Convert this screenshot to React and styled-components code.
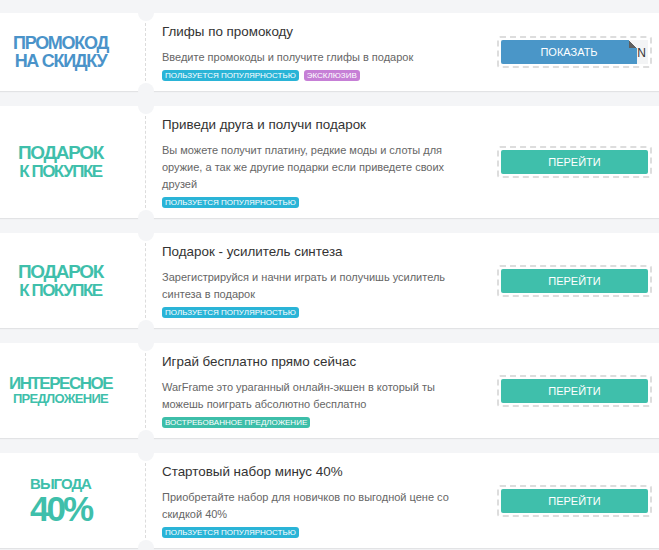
import React from 'react'
import styled, { createGlobalStyle } from 'styled-components'

const GlobalStyle = createGlobalStyle`
  html, body {
    margin: 0;
    padding: 0;
    background: #f4f5f7;
    font-family: 'Liberation Sans', Arial, sans-serif;
    overflow: hidden;
  }
`

const BLUE = '#4a93c9'
const TEAL = '#3fbfab'

const offers = [
  {
    color: BLUE,
    lines: [
      { text: 'ПРОМОКОД', size: 18, ls: -1.3, lh: 18 },
      { text: 'НА СКИДКУ', size: 18, ls: -1.3, lh: 18 },
    ],
    title: 'Глифы по промокоду',
    desc: 'Введите промокоды и получите глифы в подарок',
    tags: [
      { text: 'Пользуется популярностью', bg: '#2ab4d7' },
      { text: 'Эксклюзив', bg: '#c67fd6' },
    ],
    promo: 'N',
    button: 'Показать',
  },
  {
    color: TEAL,
    lines: [
      { text: 'ПОДАРОК', size: 19, ls: -1.3, lh: 20 },
      { text: 'К ПОКУПКЕ', size: 17, ls: -1.5, lh: 18 },
    ],
    title: 'Приведи друга и получи подарок',
    desc: 'Вы можете получит платину, редкие моды и слоты для оружие, а так же другие подарки если приведете своих друзей',
    tags: [{ text: 'Пользуется популярностью', bg: '#2ab4d7' }],
    button: 'Перейти',
  },
  {
    color: TEAL,
    lines: [
      { text: 'ПОДАРОК', size: 19, ls: -1.3, lh: 20 },
      { text: 'К ПОКУПКЕ', size: 17, ls: -1.5, lh: 18 },
    ],
    title: 'Подарок - усилитель синтеза',
    desc: 'Зарегистрируйся и начни играть и получишь усилитель синтеза в подарок',
    tags: [{ text: 'Пользуется популярностью', bg: '#2ab4d7' }],
    button: 'Перейти',
  },
  {
    color: TEAL,
    lines: [
      { text: 'ИНТЕРЕСНОЕ', size: 17, ls: -1.5, lh: 17 },
      { text: 'ПРЕДЛОЖЕНИЕ', size: 13, ls: -0.7, lh: 14 },
    ],
    title: 'Играй бесплатно прямо сейчас',
    desc: 'WarFrame это ураганный онлайн-экшен в который ты можешь поиграть абсолютно бесплатно',
    tags: [{ text: 'Востребованное предложение', bg: '#3dbea9' }],
    button: 'Перейти',
  },
  {
    color: TEAL,
    lines: [
      { text: 'ВЫГОДА', size: 15, ls: -1, lh: 15 },
      { text: '40%', size: 35, ls: -3, lh: 35 },
    ],
    title: 'Стартовый набор минус 40%',
    desc: 'Приобретайте набор для новичков по выгодной цене со скидкой 40%',
    tags: [{ text: 'Пользуется популярностью', bg: '#2ab4d7' }],
    button: 'Перейти',
  },
]

function App() {
  return (
    <Page>
      <GlobalStyle />
      {offers.map((o, i) => (
        <Card key={i}>
          <Label color={o.color}>
            {o.lines.map((l) => (
              <LabelLine key={l.text} size={l.size} ls={l.ls} lh={l.lh}>{l.text}</LabelLine>
            ))}
          </Label>
          <Body>
            <Title>{o.title}</Title>
            <Desc>{o.desc}</Desc>
            <Tags>
              {o.tags.map((t) => (
                <Tag key={t.text} bg={t.bg}>{t.text}</Tag>
              ))}
            </Tags>
          </Body>
          <Action>
            <Dashed>
              {o.promo ? (
                <PromoField>
                  <Code>{o.promo}</Code>
                  <PromoButton>{o.button}</PromoButton>
                </PromoField>
              ) : (
                <Button>{o.button}</Button>
              )}
            </Dashed>
          </Action>
        </Card>
      ))}
    </Page>
  )
}

const Page = styled.div`
  padding-top: 13px;
  width: 659px;
`

const Card = styled.div`
  position: relative;
  display: grid;
  grid-template-columns: 146px 1fr 162px;
  background: #fff;
  margin-bottom: 15px;
  box-shadow: 0 1px 1px rgba(0, 0, 0, 0.07);

  &::before,
  &::after {
    content: '';
    position: absolute;
    left: 138px;
    width: 16px;
    height: 16px;
    border-radius: 50%;
    background: #f4f5f7;
  }
  &::before {
    top: -8px;
  }
  &::after {
    bottom: -8px;
  }
`

const Label = styled.div`
  display: flex;
  flex-direction: column;
  align-items: center;
  justify-content: center;
  margin: 10px 0;
  padding-right: 24px;
  border-right: 1px dashed #dcdcdc;
  color: ${(p) => p.color};
  font-weight: bold;
  text-align: center;
`

const LabelLine = styled.div`
  font-size: ${(p) => p.size}px;
  letter-spacing: ${(p) => p.ls}px;
  line-height: ${(p) => p.lh}px;
  white-space: nowrap;
`

const Body = styled.div`
  padding: 10px 35px 10px 16px;
`

const Title = styled.div`
  font-size: 13.4px;
  line-height: 18px;
  color: #333;
  margin-bottom: 8px;
`

const Desc = styled.div`
  font-size: 11px;
  line-height: 17px;
  color: #666;
`

const Tags = styled.div`
  display: flex;
  gap: 5px;
  margin-top: 4px;
`

const Tag = styled.span`
  display: inline-block;
  height: 11px;
  line-height: 11px;
  padding: 0 3px;
  border-radius: 3px;
  background: ${(p) => p.bg};
  color: #fff;
  font-size: 8px;
  text-transform: uppercase;
  white-space: nowrap;
`

const Action = styled.div`
  display: flex;
  align-items: center;
  padding-right: 7px;
`

const Dashed = styled.div`
  width: 155px;
  box-sizing: border-box;
  border: 2px dashed #dddddd;
  border-radius: 3px;
  padding: 2px;
`

const Button = styled.div`
  height: 24px;
  line-height: 24px;
  border-radius: 2px;
  background: ${TEAL};
  color: #fff;
  font-size: 11px;
  text-align: center;
  text-transform: uppercase;
`

const PromoField = styled.div`
  position: relative;
  height: 24px;
  background: #f3f4f5;
`

const Code = styled.div`
  text-align: right;
  padding-right: 2px;
  font-size: 12px;
  line-height: 26px;
  color: #333;
`

const PromoButton = styled.div`
  position: absolute;
  top: 0;
  left: 0;
  right: 11px;
  height: 24px;
  line-height: 24px;
  border-radius: 2px 0 0 2px;
  background: #4a96c8;
  color: #fff;
  font-size: 11px;
  text-align: center;
  text-transform: uppercase;

  &::after {
    content: '';
    position: absolute;
    top: 0;
    right: 0;
    width: 8px;
    height: 8px;
    background: linear-gradient(to left bottom, #f3f4f5 50%, #5f5f5f 50%);
  }
`

export default App
